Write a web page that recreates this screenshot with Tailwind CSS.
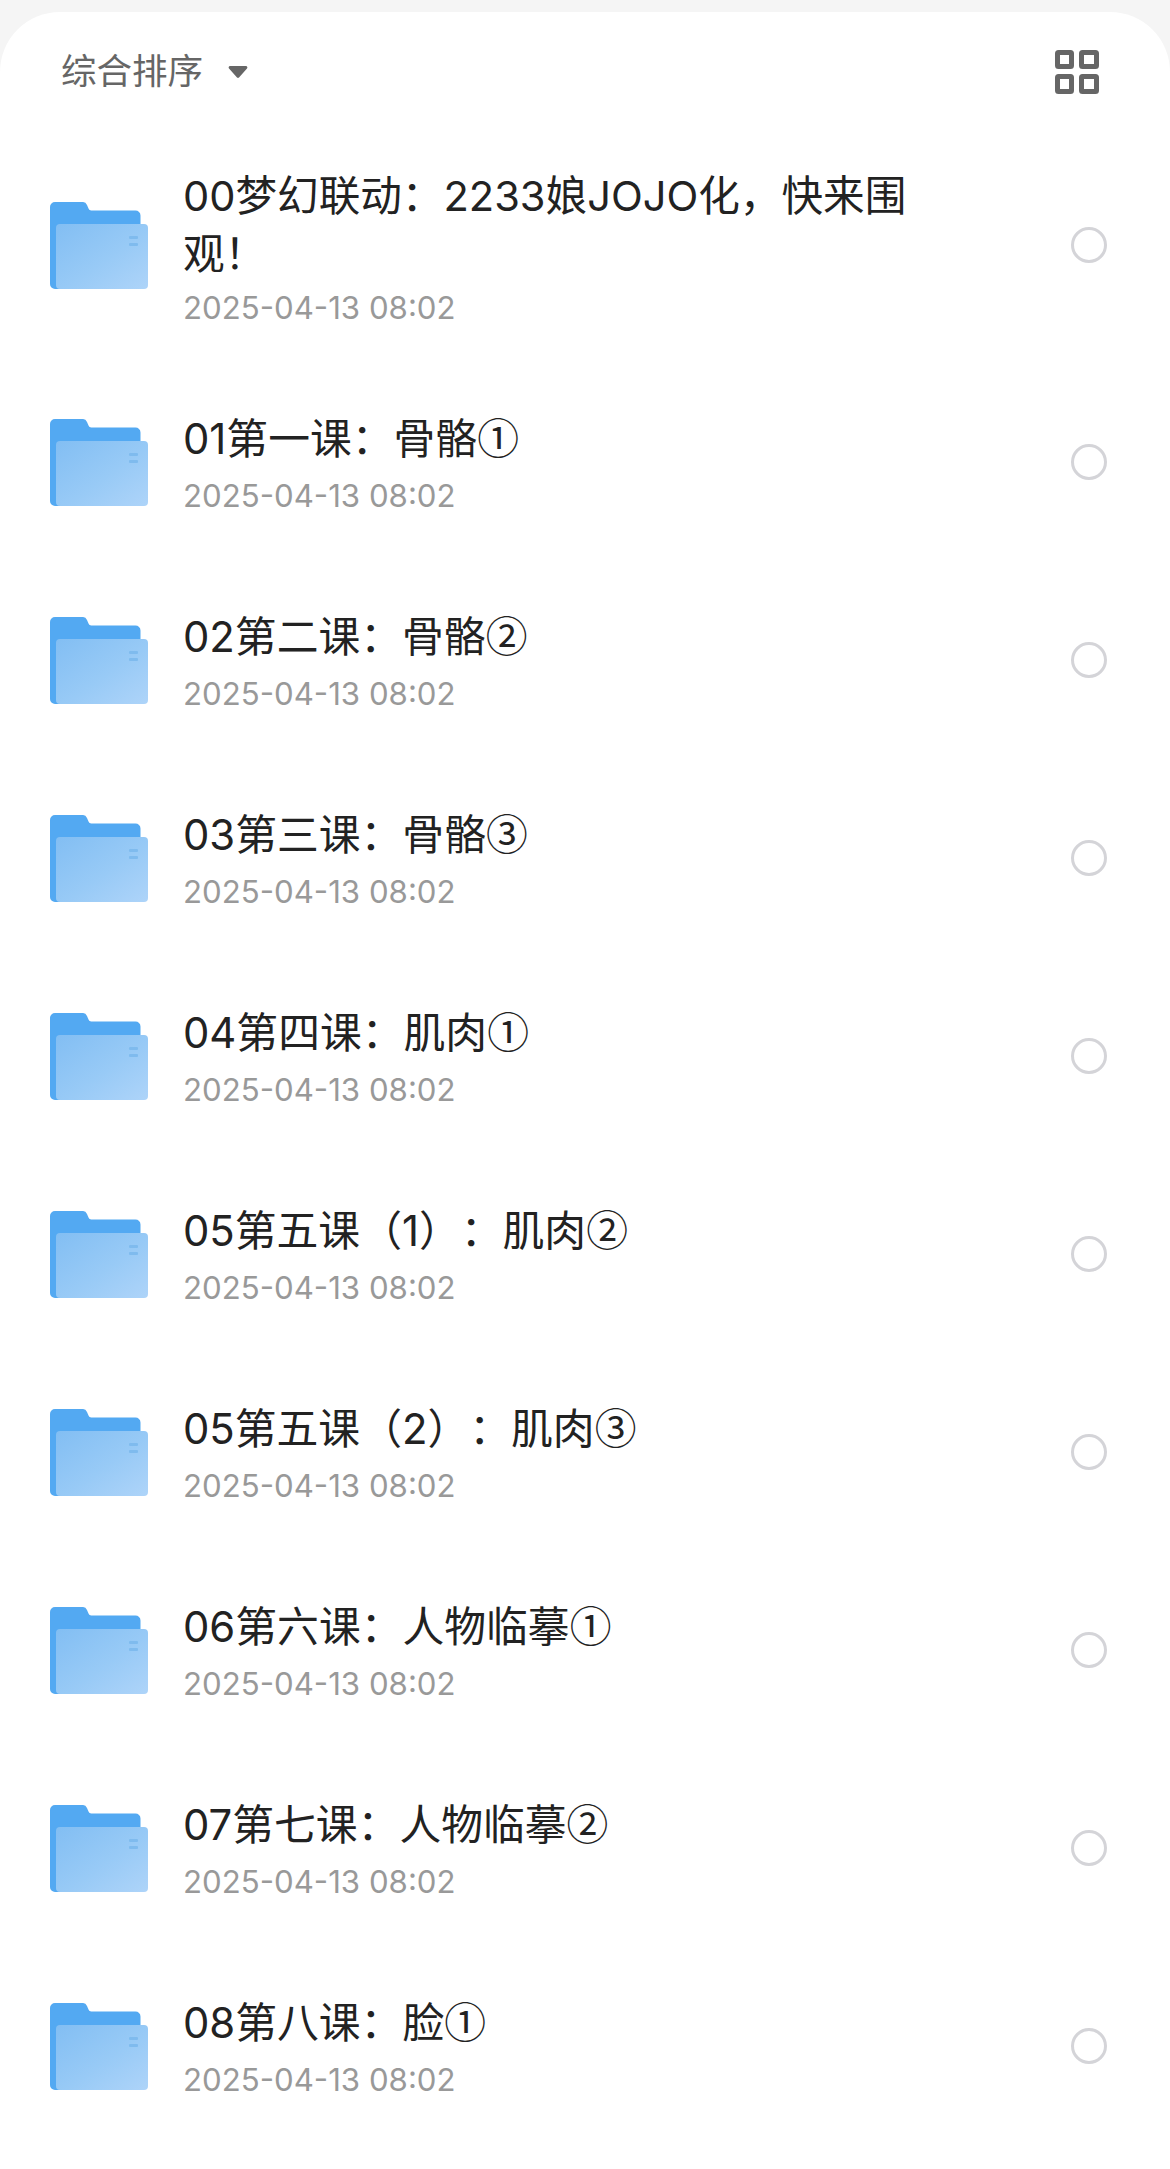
<!DOCTYPE html>
<html lang="zh-CN">
<head>
  <meta charset="UTF-8" />
  <title>文件列表</title>
  <script src="https://cdn.jsdelivr.net/npm/@tailwindcss/browser@4"></script>
</head>
<body class="bg-[#f5f5f5] font-['Inter','Noto_Sans_CJK_SC',sans-serif] [text-spacing-trim:space-all]">
  <svg class="absolute w-0 h-0">
    <defs>
      <linearGradient id="front" x1="0" y1="0" x2="1" y2="1">
        <stop offset="0" stop-color="#82bef3" />
        <stop offset="0.55" stop-color="#98caf6" />
        <stop offset="1" stop-color="#aed4f9" />
      </linearGradient>
      <symbol id="folder" viewBox="0 0 98 87">
        <path d="M0 5a5 5 0 0 1 5-5h27a5 5 0 0 1 5 3l1.500 3.500a3 3 0 0 0 3 2h44a5 5 0 0 1 5 5V82a5 5 0 0 1-5 5H5a5 5 0 0 1-5-5Z" fill="#53a9f2" />
        <rect x="6" y="22" width="92" height="65" rx="4" fill="url(#front)" />
        <rect x="79" y="34" width="9" height="3" rx="1" fill="#7fbbee" />
        <rect x="79" y="41" width="9" height="3" rx="1" fill="#7fbbee" />
      </symbol>
    </defs>
  </svg>

  <main class="mt-3 min-h-[2157px] bg-white rounded-t-[60px]">
    <!-- 排序栏 -->
    <div class="h-[115px] flex items-start justify-between pt-[31px] pl-[61px] pr-[71px]">
      <button class="flex items-center h-[58px] text-[35.500px] text-[#666666]">
        综合排序
        <svg class="ml-[25px]" width="20" height="15" viewBox="0 0 20 15"><path d="M2 1h16a1.500 1.500 0 0 1 1 2.500l-8 9a1.500 1.500 0 0 1-2 0l-8-9A1.500 1.500 0 0 1 2 1Z" fill="#666666" /></svg>
      </button>
      <svg class="mt-[7px]" width="44" height="44" viewBox="0 0 44 44" fill="none" stroke="#666666" stroke-width="5">
        <rect x="2.500" y="2.500" width="14" height="14" rx="1" />
        <rect x="26.500" y="2.500" width="15" height="14" rx="1" />
        <rect x="2.500" y="26.500" width="14" height="15" rx="1" />
        <rect x="26.500" y="26.500" width="15" height="15" rx="1" />
      </svg>
    </div>

    <!-- 文件夹列表 -->
    <ul>
      <li class="h-[236px] flex items-center pl-[50px] pr-[63px]">
        <svg class="w-[98px] h-[87px] shrink-0"><use href="#folder" /></svg>
        <div class="ml-[35px] w-[730px] pt-[9px]">
          <p class="text-[41.600px] leading-[58px] text-[#222222]">00梦幻联动：2233娘JOJO化，快来围观！</p>
          <p class="text-[31.200px] leading-[50px] text-[#999999]">2025-04-13 08:02</p>
        </div>
        <span class="ml-auto w-9 h-9 rounded-full border-[3.500px] border-[#d4d4d8]"></span>
      </li>
      <li class="h-[198px] flex items-center pl-[50px] pr-[63px]">
        <svg class="w-[98px] h-[87px] shrink-0"><use href="#folder" /></svg>
        <div class="ml-[35px] w-[730px] pt-[4px]">
          <p class="text-[41.800px] leading-[58px] text-[#222222]">01第一课：骨骼<span class="font-['Noto_Sans_CJK_SC']">①</span></p>
          <p class="mt-[3px] text-[31.200px] leading-[50px] text-[#999999]">2025-04-13 08:02</p>
        </div>
        <span class="ml-auto w-9 h-9 rounded-full border-[3.500px] border-[#d4d4d8]"></span>
      </li>
      <li class="h-[198px] flex items-center pl-[50px] pr-[63px]">
        <svg class="w-[98px] h-[87px] shrink-0"><use href="#folder" /></svg>
        <div class="ml-[35px] w-[730px] pt-[4px]">
          <p class="text-[41.800px] leading-[58px] text-[#222222]">02第二课：骨骼<span class="font-['Noto_Sans_CJK_SC']">②</span></p>
          <p class="mt-[3px] text-[31.200px] leading-[50px] text-[#999999]">2025-04-13 08:02</p>
        </div>
        <span class="ml-auto w-9 h-9 rounded-full border-[3.500px] border-[#d4d4d8]"></span>
      </li>
      <li class="h-[198px] flex items-center pl-[50px] pr-[63px]">
        <svg class="w-[98px] h-[87px] shrink-0"><use href="#folder" /></svg>
        <div class="ml-[35px] w-[730px] pt-[4px]">
          <p class="text-[41.800px] leading-[58px] text-[#222222]">03第三课：骨骼<span class="font-['Noto_Sans_CJK_SC']">③</span></p>
          <p class="mt-[3px] text-[31.200px] leading-[50px] text-[#999999]">2025-04-13 08:02</p>
        </div>
        <span class="ml-auto w-9 h-9 rounded-full border-[3.500px] border-[#d4d4d8]"></span>
      </li>
      <li class="h-[198px] flex items-center pl-[50px] pr-[63px]">
        <svg class="w-[98px] h-[87px] shrink-0"><use href="#folder" /></svg>
        <div class="ml-[35px] w-[730px] pt-[4px]">
          <p class="text-[41.800px] leading-[58px] text-[#222222]">04第四课：肌肉<span class="font-['Noto_Sans_CJK_SC']">①</span></p>
          <p class="mt-[3px] text-[31.200px] leading-[50px] text-[#999999]">2025-04-13 08:02</p>
        </div>
        <span class="ml-auto w-9 h-9 rounded-full border-[3.500px] border-[#d4d4d8]"></span>
      </li>
      <li class="h-[198px] flex items-center pl-[50px] pr-[63px]">
        <svg class="w-[98px] h-[87px] shrink-0"><use href="#folder" /></svg>
        <div class="ml-[35px] w-[730px] pt-[4px]">
          <p class="text-[41.800px] leading-[58px] text-[#222222]">05第五课（1）：肌肉<span class="font-['Noto_Sans_CJK_SC']">②</span></p>
          <p class="mt-[3px] text-[31.200px] leading-[50px] text-[#999999]">2025-04-13 08:02</p>
        </div>
        <span class="ml-auto w-9 h-9 rounded-full border-[3.500px] border-[#d4d4d8]"></span>
      </li>
      <li class="h-[198px] flex items-center pl-[50px] pr-[63px]">
        <svg class="w-[98px] h-[87px] shrink-0"><use href="#folder" /></svg>
        <div class="ml-[35px] w-[730px] pt-[4px]">
          <p class="text-[41.800px] leading-[58px] text-[#222222]">05第五课（2）：肌肉<span class="font-['Noto_Sans_CJK_SC']">③</span></p>
          <p class="mt-[3px] text-[31.200px] leading-[50px] text-[#999999]">2025-04-13 08:02</p>
        </div>
        <span class="ml-auto w-9 h-9 rounded-full border-[3.500px] border-[#d4d4d8]"></span>
      </li>
      <li class="h-[198px] flex items-center pl-[50px] pr-[63px]">
        <svg class="w-[98px] h-[87px] shrink-0"><use href="#folder" /></svg>
        <div class="ml-[35px] w-[730px] pt-[4px]">
          <p class="text-[41.800px] leading-[58px] text-[#222222]">06第六课：人物临摹<span class="font-['Noto_Sans_CJK_SC']">①</span></p>
          <p class="mt-[3px] text-[31.200px] leading-[50px] text-[#999999]">2025-04-13 08:02</p>
        </div>
        <span class="ml-auto w-9 h-9 rounded-full border-[3.500px] border-[#d4d4d8]"></span>
      </li>
      <li class="h-[198px] flex items-center pl-[50px] pr-[63px]">
        <svg class="w-[98px] h-[87px] shrink-0"><use href="#folder" /></svg>
        <div class="ml-[35px] w-[730px] pt-[4px]">
          <p class="text-[41.800px] leading-[58px] text-[#222222]">07第七课：人物临摹<span class="font-['Noto_Sans_CJK_SC']">②</span></p>
          <p class="mt-[3px] text-[31.200px] leading-[50px] text-[#999999]">2025-04-13 08:02</p>
        </div>
        <span class="ml-auto w-9 h-9 rounded-full border-[3.500px] border-[#d4d4d8]"></span>
      </li>
      <li class="h-[198px] flex items-center pl-[50px] pr-[63px]">
        <svg class="w-[98px] h-[87px] shrink-0"><use href="#folder" /></svg>
        <div class="ml-[35px] w-[730px] pt-[4px]">
          <p class="text-[41.800px] leading-[58px] text-[#222222]">08第八课：脸<span class="font-['Noto_Sans_CJK_SC']">①</span></p>
          <p class="mt-[3px] text-[31.200px] leading-[50px] text-[#999999]">2025-04-13 08:02</p>
        </div>
        <span class="ml-auto w-9 h-9 rounded-full border-[3.500px] border-[#d4d4d8]"></span>
      </li>
    </ul>
  </main>
</body>
</html>
